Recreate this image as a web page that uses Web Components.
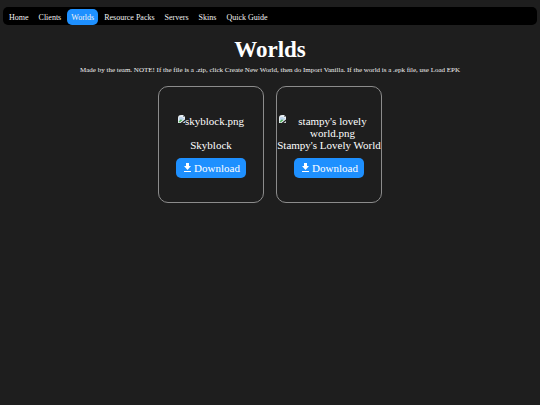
<!DOCTYPE html>
<html lang="en">
<head>
<meta charset="utf-8">
<meta name="viewport" content="width=device-width, initial-scale=1">
<title>Worlds</title>
<style>
    body {
        margin: 0;
        padding: 7px 3px;
        background: #1e1e1e;
        color: #fff;
        font-family: "Liberation Serif", "Times New Roman", serif;
    }
</style>
</head>
<body>
<site-nav>
    <nav-link href="#home">Home</nav-link>
    <nav-link href="#clients">Clients</nav-link>
    <nav-link href="#worlds" active>Worlds</nav-link>
    <nav-link href="#packs">Resource Packs</nav-link>
    <nav-link href="#servers">Servers</nav-link>
    <nav-link href="#skins">Skins</nav-link>
    <nav-link href="#guide">Quick Guide</nav-link>
</site-nav>
<page-intro>
    <span slot="title">Worlds</span>
    Made by the team. NOTE! If the file is a .zip, click Create New World, then do Import Vanilla. If the world is a .epk file, use Load EPK
</page-intro>
<card-grid>
    <world-card name="Skyblock" image="skyblock.png"></world-card>
    <world-card name="Stampy's Lovely World" image="stampy's lovely world.png"></world-card>
</card-grid>

<script>
class SiteNav extends HTMLElement {
    constructor() {
        super();
        this.attachShadow({ mode: 'open' });
        this.shadowRoot.innerHTML = `
            <style>
                :host { display: block; }
                nav {
                    display: flex;
                    flex-wrap: wrap;
                    gap: 2px;
                    padding: 2px 2px 0;
                    background: #000;
                    border-radius: 5px;
                }
            </style>
            <nav><slot></slot></nav>
        `;
    }
}

class NavLink extends HTMLElement {
    constructor() {
        super();
        this.attachShadow({ mode: 'open' });
    }

    connectedCallback() {
        this.shadowRoot.innerHTML = `
            <style>
                :host { display: block; }
                a {
                    display: block;
                    padding: 4px 4px 2px;
                    border-radius: 5px;
                    color: #f2f2f2;
                    font-size: 8px;
                    line-height: 10px;
                    text-decoration: none;
                }
                :host([active]) a { background: #1e90ff; }
            </style>
            <a><slot></slot></a>
        `;
        this.shadowRoot.querySelector('a').href = this.getAttribute('href');
    }
}

class PageIntro extends HTMLElement {
    constructor() {
        super();
        this.attachShadow({ mode: 'open' });
        this.shadowRoot.innerHTML = `
            <style>
                :host { display: block; text-align: center; }
                h1 { margin: 11px 0 0; font-size: 23px; line-height: 28px; }
                p { margin: 0; color: #f2f2f2; font-size: 7px; line-height: 12px; }
            </style>
            <h1><slot name="title"></slot></h1>
            <p><slot></slot></p>
        `;
    }
}

class CardGrid extends HTMLElement {
    constructor() {
        super();
        this.attachShadow({ mode: 'open' });
        this.shadowRoot.innerHTML = `
            <style>
                :host {
                    display: flex;
                    flex-wrap: wrap;
                    justify-content: center;
                    gap: 12px;
                    margin-top: 10px;
                }
            </style>
            <slot></slot>
        `;
    }
}

class WorldCard extends HTMLElement {
    constructor() {
        super();
        this.attachShadow({ mode: 'open' });
    }

    connectedCallback() {
        this.shadowRoot.innerHTML = `
            <style>
                :host {
                    display: flex;
                    flex-direction: column;
                    align-items: center;
                    box-sizing: border-box;
                    width: 106px;
                    padding: 28px 2px 24px;
                    border: 1px solid #8c8c8c;
                    border-radius: 10px;
                    font-size: 11px;
                    line-height: 12px;
                    text-align: center;
                }
                .thumb { display: flex; min-height: 24px; }
                .thumb svg { flex: none; width: 7px; height: 8px; }
                h2 { margin: 0; font-size: 11px; font-weight: normal; white-space: nowrap; }
                button {
                    display: flex;
                    align-items: center;
                    gap: 1px;
                    margin-top: 7px;
                    padding: 4px 6px;
                    border: 0;
                    border-radius: 5px;
                    background: #1e90ff;
                    color: #fff;
                    font: inherit;
                }
                button svg { width: 11px; height: 12px; }
            </style>
            <div class="thumb">
                <svg viewBox="0 0 14 16" aria-hidden="true">
                    <path d="M6 0h4l4 4v5L5 16H0V6a6 6 0 0 1 6-6z" fill="#e8eef2"/>
                    <path d="M3 4h6v2h3v2l-7 5H2V6z" fill="#bcd3ec"/>
                    <path d="M1 14l4-5 4 1-6 5z" fill="#4caf50"/>
                    <path d="M10 0v4h4z" fill="#8c9296"/>
                    <path d="M14 12v4H9z" fill="#c8ced2"/>
                </svg>
                <span class="alt"></span>
            </div>
            <h2></h2>
            <button type="button">
                <svg viewBox="0 0 11 12" fill="#fff" aria-hidden="true">
                    <path d="M4 1h3v3h2L5.500 8 2 4h2zM2 9h7v1H2z"/>
                </svg>
                Download
            </button>
        `;
        this.shadowRoot.querySelector('.alt').textContent = this.getAttribute('image');
        this.shadowRoot.querySelector('h2').textContent = this.getAttribute('name');
    }
}

customElements.define('site-nav', SiteNav);
customElements.define('nav-link', NavLink);
customElements.define('page-intro', PageIntro);
customElements.define('card-grid', CardGrid);
customElements.define('world-card', WorldCard);
</script>
</body>
</html>
